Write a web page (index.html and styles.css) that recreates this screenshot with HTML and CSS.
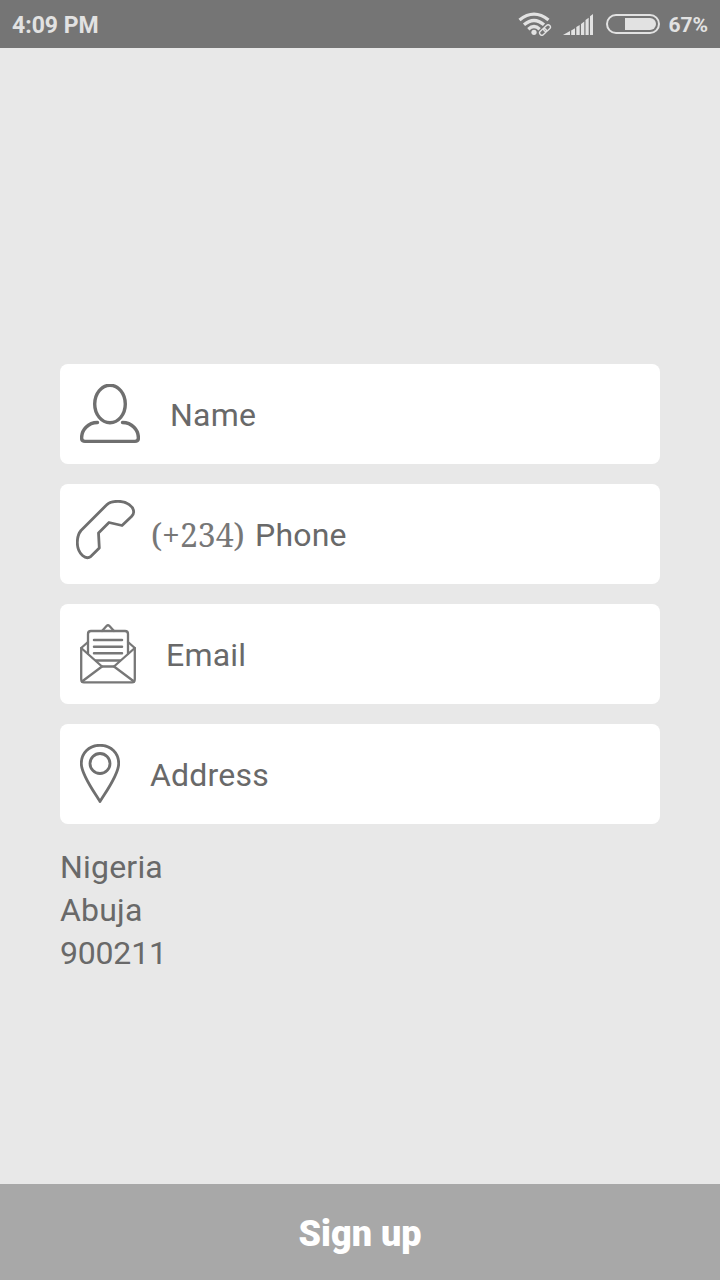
FILE: index.html
```html
<!DOCTYPE html>
<html lang="en">
<head>
    <meta charset="UTF-8">
    <meta name="viewport" content="width=device-width, initial-scale=1.0">
    <title>Sign up</title>
    <link rel="stylesheet" href="styles.css">
</head>
<body>
    <header class="status-bar">
        <span class="time">4:09 PM</span>
        <div class="indicators">
            <svg class="wifi" width="34" height="24" viewBox="0 0 34 24" fill="none" stroke="#e2e2e2" stroke-width="3.3">
                <path d="M1.5 8 Q16 -3.8 30.5 8"/>
                <path d="M6 12.8 Q16 4.2 26 12.8"/>
                <path d="M10.3 17.2 Q16 12 21.7 17.2"/>
                <circle cx="16" cy="20.3" r="2.6" fill="#e2e2e2" stroke="none"/>
                <path stroke="#757575" stroke-width="6.5" d="M23 21.5 L31 14.5"/>
                <g stroke-width="1.4" transform="rotate(-43 27 18)">
                    <rect x="20.5" y="15.7" width="7.5" height="4.6" rx="2.3"/>
                    <rect x="26" y="15.7" width="7.5" height="4.6" rx="2.3"/>
                </g>
            </svg>
            <svg class="signal" width="31" height="21" viewBox="0 0 31 21" fill="#e2e2e2">
                <path d="M0 21 L7 17 V21Z M8.2 16.5 L12 14.2 V21 H8.2Z M13.3 13 L16.7 11 V21 H13.3Z M18 10 L21.3 7.5 V21 H18Z M22.5 6 L25.7 3.8 V21 H22.5Z M27 2.2 L30 0 V21 H27Z"/>
            </svg>
            <svg class="battery" width="54" height="20" viewBox="0 0 54 20">
                <rect x="1" y="1" width="52" height="18" rx="9" fill="none" stroke="#e2e2e2" stroke-width="2"/>
                <path d="M19 4 H44 A6 6 0 0 1 44 16 H19Z" fill="#e2e2e2"/>
            </svg>
            <span class="percent">67%</span>
        </div>
    </header>

    <main class="form">
        <div class="field">
            <svg class="icon name-icon" width="60" height="60" viewBox="0 0 60 60">
                <ellipse cx="30" cy="20" rx="15.3" ry="18.7"/>
                <path d="M17.5 38.5 C8 38.5 1.6 46 1.6 54 Q1.6 57.4 5 57.4 H55 Q58.4 57.4 58.4 54 C58.4 46 52 38.5 42.5 38.5"/>
            </svg>
            <span class="label">Name</span>
        </div>
        <div class="field">
            <svg class="icon phone-icon" width="60" height="60" viewBox="0 0 60 60">
                <path d="M30.5 5 Q34 1.3 42 1.3 C51 1.3 57.7 6.5 57.7 12 Q57.7 14 55.5 16.5 L46 25.5 L33 22.5 L22.5 33 L23.3 48 L15 56.3 Q11 59.5 6.5 55.5 C2.5 52 1.3 47 1.3 42.5 Q1.3 35 5 30.5 Z"/>
            </svg>
            <span class="prefix">(+234)</span>
            <span class="label">Phone</span>
        </div>
        <div class="field">
            <svg class="icon email-icon" width="56" height="60" viewBox="0 0 56 60">
                <path d="M8 29.5 V10 Q8 7 11 7 H45 Q48 7 48 10 V29.5"/>
                <path d="M22 7 L26.5 2 Q28 0.6 29.5 2 L34 7"/>
                <path d="M8 18 L1.2 24 V55 Q1.2 58.4 4 58.4 H52 Q54.8 58.4 54.8 55 V24 L48 18"/>
                <path d="M1.2 24 L22 42.5 H34 L54.8 24"/>
                <path d="M2 57.5 L22 42.5 M34 42.5 L54 57.5"/>
                <path d="M16 36.5 H40"/>
                <path class="lines" d="M14 16 H42 M14 22.7 H42 M14 29.3 H42"/>
            </svg>
            <span class="label">Email</span>
        </div>
        <div class="field">
            <svg class="icon address-icon" width="40" height="60" viewBox="0 0 40 60">
                <path d="M20 57.5 C15 49 1.3 31 1.3 19.5 C1.3 9 9 1.3 20 1.3 S38.7 9 38.7 19.5 C38.7 31 25 49 20 57.5Z"/>
                <circle cx="20" cy="19.5" r="10"/>
            </svg>
            <span class="label">Address</span>
        </div>
        <div class="location">
            <div>Nigeria</div>
            <div>Abuja</div>
            <div class="postcode">900211</div>
        </div>
    </main>

    <button class="signup">Sign up</button>
</body>
</html>
```
FILE: styles.css
```css
body {
    font-family: Roboto, sans-serif;
    background-color: #e8e8e8;
    color: #696969;
    margin: 0;
    height: 1280px;
    display: flex;
    flex-direction: column;
    overflow: hidden;
}

.status-bar {
    box-sizing: border-box;
    height: 48px;
    padding: 0 12px;
    display: flex;
    justify-content: space-between;
    align-items: center;
    background-color: #757575;
    color: #e2e2e2;
    font-size: 23px;
    font-weight: 700;
    line-height: 48px;
}

.time {
    padding-top: 3px;
}

.indicators {
    display: flex;
    align-items: center;
}

.signal {
    margin-left: 11px;
}

.battery {
    margin: 0 8px 0 12px;
}

.percent {
    padding-top: 2px;
    font-size: 21px;
}

.form {
    flex: 1;
    padding: 316px 60px 0;
}

.field {
    box-sizing: border-box;
    height: 100px;
    margin-bottom: 20px;
    padding-left: 20px;
    display: flex;
    align-items: center;
    background-color: #fff;
    border-radius: 8px;
    font-size: 32px;
    line-height: 44px;
}

.icon {
    fill: none;
    stroke: #6f6f6f;
    stroke-width: 2.8;
    stroke-linejoin: round;
    stroke-linecap: round;
    flex-shrink: 0;
}

.label {
    padding-top: 2px;
    letter-spacing: 0.2px;
}

.name-icon,
.email-icon,
.address-icon {
    margin-right: 30px;
}

.name-icon {
    stroke-width: 3.4;
}

.phone-icon {
    margin: 0 15px 8px -4px;
}

.email-icon {
    stroke: #777;
    stroke-width: 2.3;
}

.lines {
    stroke-width: 2.5;
}

.prefix {
    width: 104px;
    padding-top: 1px;
    font-family: "Noto Serif", "Liberation Serif", serif;
    font-size: 32px;
    color: #777;
}

.location {
    padding-top: 2px;
    font-size: 32px;
    line-height: 43px;
    letter-spacing: 0.2px;
}

.postcode {
    letter-spacing: -0.2px;
}

.signup {
    height: 96px;
    padding: 4px 0 0;
    border: none;
    background-color: #a8a8a8;
    color: #fff;
    font-family: Roboto, sans-serif;
    font-size: 36px;
    font-weight: 900;
}
```
